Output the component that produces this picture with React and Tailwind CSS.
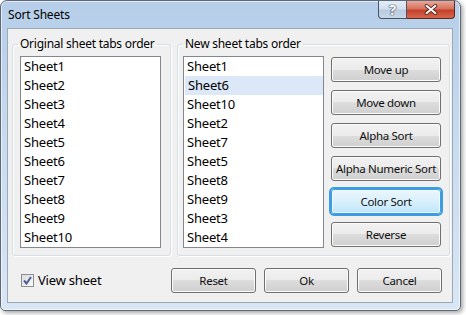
import React from 'react'
import clsx from 'clsx'

const ORIGINAL = ['Sheet1', 'Sheet2', 'Sheet3', 'Sheet4', 'Sheet5', 'Sheet6', 'Sheet7', 'Sheet8', 'Sheet9', 'Sheet10']
const SORTED = ['Sheet1', 'Sheet6', 'Sheet10', 'Sheet2', 'Sheet7', 'Sheet5', 'Sheet8', 'Sheet9', 'Sheet3', 'Sheet4']
const ACTIONS = ['Move up', 'Move down', 'Alpha Sort', 'Alpha Numeric Sort', 'Color Sort', 'Reverse']

function WinButton({ label, focused, className }) {
  return (
    <button
      className={clsx(
        'h-[25px] rounded-[3px] border text-[11.5px] tracking-[-0.3px] whitespace-nowrap text-[#111] leading-none',
        focused
          ? 'border-[#3c9ee0] outline-2 outline-[#3c9ee0] bg-gradient-to-b from-[#eaf6fd] via-[#d9f0fc] to-[#bee6fd] shadow-[inset_0_0_0_1px_#f4fbff]'
          : 'border-[#707070] bg-[linear-gradient(#f2f2f2,#ebebeb_50%,#dddddd_50%,#cfcfcf)] shadow-[inset_0_0_0_1px_#fbfbfb]',
        className
      )}
    >
      {label}
    </button>
  )
}

function ListBox({ items, selected }) {
  return (
    <div className="w-[141px] h-[192px] border border-[#828790] bg-white">
      {items.map((name, i) => (
        <div
          key={name}
          className={clsx(
            'h-[19px] pl-[3px] flex items-center text-[13px] tracking-[-0.2px] text-black',
            i === selected && 'bg-[#dce7f8] ml-[1px] pl-[2px]'
          )}
        >
          {name}
        </div>
      ))}
    </div>
  )
}

function GroupBox({ title, className, children }) {
  return (
    <fieldset className={clsx('h-[220px] border border-[#d5dfe5] rounded-[3px] shadow-[inset_1px_1px_0_#fff,1px_1px_0_#fff]', className)}>
      <legend className="px-[2px] text-[12px] tracking-[-0.25px] leading-[16px] text-black">{title}</legend>
      {children}
    </fieldset>
  )
}

export default function App() {
  return (
    <div className="w-[466px] h-[315px] bg-white font-['Noto_Sans',sans-serif]">
      <div className="w-[461px] h-[311px] flex flex-col rounded-t-[7px] rounded-b-[5px] border border-[#5d6977] bg-gradient-to-b from-[#b6cee9] via-[#cadcf0] to-[#d9e6f5] shadow-[2px_2px_4px_rgba(0,0,0,0.35),inset_0_0_0_1px_rgba(255,255,255,0.6)]">

        {/* title bar */}
        <div className="h-[27px] flex items-start">
          <span className="pl-[7px] pt-[5px] text-[12px] tracking-[-0.2px] text-black">Sort Sheets</span>
          <div className="ml-auto mr-[5px] flex">
            <div className="w-[29px] h-[18px] flex items-center justify-center rounded-bl-[4px] border border-t-0 border-[#4a5666] bg-[linear-gradient(#e4edf7,#d2dfee_45%,#b9cbe0_55%,#c8d7e8)]">
              <span className="text-[15px] font-bold leading-none text-white [text-shadow:0_0_1px_#2e3a4a,0_0_1px_#2e3a4a,0_0_1px_#2e3a4a]">?</span>
            </div>
            <div className="w-[48px] h-[18px] flex items-center justify-center rounded-br-[4px] border border-l-0 border-t-0 border-[#5a2a22] bg-[linear-gradient(#e9a899,#d7715d_45%,#c2412a_55%,#d9664e)]">
              <svg width="14" height="11" viewBox="0 0 14 11">
                <path d="M2.5 1.8 L11.5 9.2 M11.5 1.8 L2.5 9.2" stroke="#4a1d15" strokeWidth="3.6" strokeLinecap="round" />
                <path d="M2.5 1.8 L11.5 9.2 M11.5 1.8 L2.5 9.2" stroke="#fff" strokeWidth="2" strokeLinecap="round" />
              </svg>
            </div>
          </div>
        </div>

        {/* client area */}
        <div className="flex-1 ml-[6px] mr-[7px] mb-[7px] border border-[#9ba8b6] bg-[#f0f0f0] pl-[4px] pt-[7px] flex flex-col">
          <div className="flex gap-[6px]">
            <GroupBox title="Original sheet tabs order" className="w-[159px] pl-[5px] pt-[4px]">
              <div className="ml-[2px]">
                <ListBox items={ORIGINAL} selected={-1} />
              </div>
            </GroupBox>
            <GroupBox title="New sheet tabs order" className="w-[273px] pl-[5px] pt-[4px]">
              <div className="flex gap-[7px]">
                <ListBox items={SORTED} selected={1} />
                <div className="mt-[1px] flex flex-col gap-[8px]">
                  {ACTIONS.map(a => (
                    <WinButton key={a} label={a} focused={a === 'Color Sort'} className="w-[110px]" />
                  ))}
                </div>
              </div>
            </GroupBox>
          </div>

          <div className="mt-[12px] flex items-center">
            <label className="ml-[9px] flex items-center gap-[4px] text-[13px] tracking-[-0.2px] text-black">
              <span className="w-[13px] h-[13px] border border-[#8e8f8f] bg-gradient-to-br from-[#dcdcdc] to-[#fafafa] flex items-center justify-center">
                <svg width="9" height="9" viewBox="0 0 9 9">
                  <path d="M1 4.5 L3.5 7.5 L8 1" fill="none" stroke="#4a5f97" strokeWidth="2" />
                </svg>
              </span>
              View sheet
            </label>
            <div className="ml-auto mr-[10px] flex gap-[8px]">
              <WinButton label="Reset" className="w-[85px]" />
              <WinButton label="Ok" className="w-[85px]" />
              <WinButton label="Cancel" className="w-[85px]" />
            </div>
          </div>
        </div>
      </div>
    </div>
  )
}
